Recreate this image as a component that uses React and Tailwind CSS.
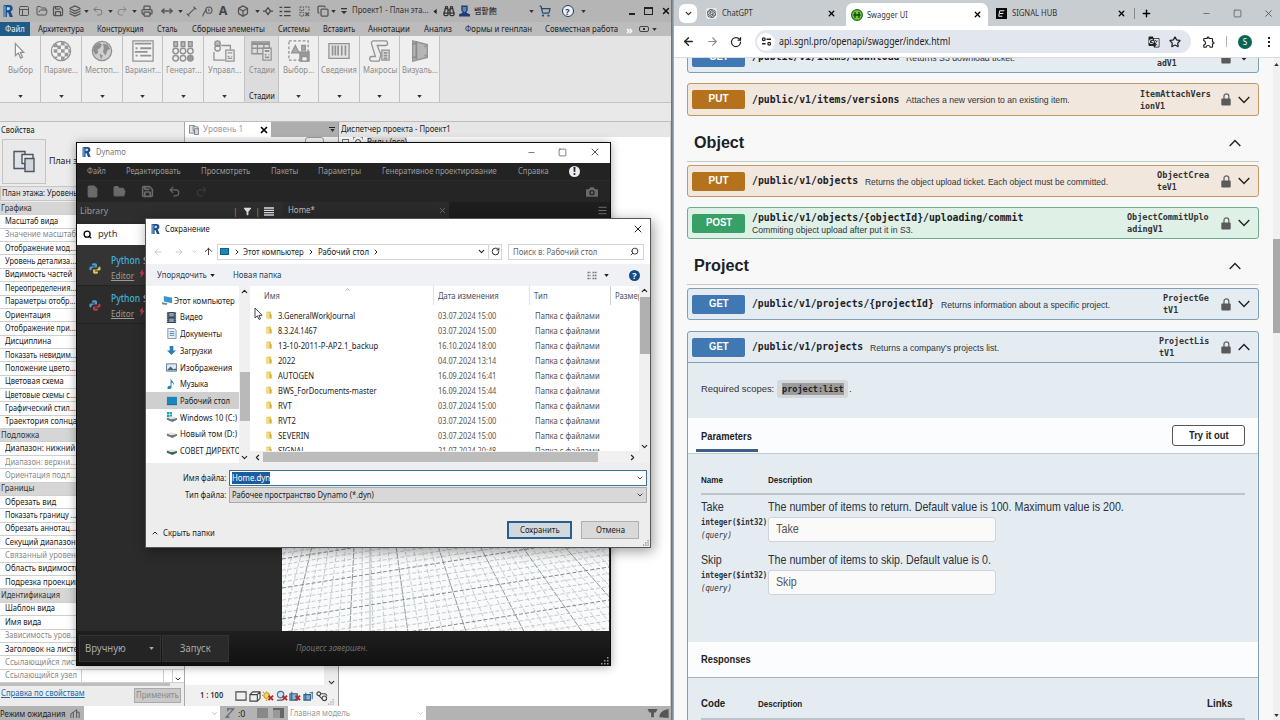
import { useLayoutEffect, useRef, useState } from "react";
import {
  ArrowLeft, ArrowRight, ArrowUp, Binoculars, Box, Camera, ChevronDown, ChevronLeft, ChevronRight, ChevronUp,
  Copy, File, FolderOpen, Layers, Menu, Minus, MoveHorizontal, PanelsTopLeft, Plus,
  Printer, Redo2, RotateCw, Save, Search, ShoppingCart, Square, Star, Undo2, X,
} from "lucide-react";
import { MdGTranslate, MdOutlineExtension, MdFilterAlt } from "react-icons/md";
import { SiOpenai } from "react-icons/si";

/* One line of text condensed horizontally to a given width. */
function Fit({ w, className = "", inner = "", children }) {
  const ref = useRef(null);
  const [k, setK] = useState(1);
  useLayoutEffect(() => {
    setK(w / ref.current.offsetWidth);
  }, [w]);
  return (
    <span className={"block shrink-0 whitespace-nowrap " + className} style={{ width: w }}>
      <span ref={ref} className={"inline-block origin-left " + inner} style={{ transform: `scaleX(${k})` }}>{children}</span>
    </span>
  );
}

function Caret({ className = "text-[#333]" }) {
  return (
    <svg viewBox="0 0 6 4" className={"h-[3px] w-[5px] " + className}><path d="M0 0h6L3 4z" fill="currentColor" /></svg>
  );
}

function RLogo({ className = "h-[12px] w-[10px]" }) {
  return (
    <svg viewBox="0 0 10 12" className={className}>
      <path d="M1 0h5.500c2 0 3.200 1.300 3.200 3.300 0 1.700-.8 2.700-2 3.100L10 12H6.700L5.200 7.500H3.900V12H1z" fill="#1d4f8c" />
      <path d="M3.900 2.200h1.700c1 0 1.300.5 1.300 1.200S6.500 4.900 5.600 4.900H3.900z" fill="#c9d9e9" />
      <path d="M0 0l2.800 1.500V12H0z" fill="#5b8fc4" />
    </svg>
  );
}

/* ---------- Revit ---------- */

function Tag() {
  return (
    <svg viewBox="0 0 16 16" className="h-[11px] w-[11px]" fill="none" stroke="#555" strokeWidth="1.600">
      <path d="M1 15c2-6 3-8 6-9" /><circle cx="10" cy="6" r="4.500" /><path d="M10 4v4" />
    </svg>
  );
}
function Dim() {
  return (
    <svg viewBox="0 0 16 16" className="h-[11px] w-[11px]" fill="none" stroke="#555" strokeWidth="1.600">
      <path d="M3 13L13 3M1 11l4 4M11 1l4 4" />
    </svg>
  );
}
function Lines() {
  return (
    <svg viewBox="0 0 12 12" className="h-[11px] w-[12px]" stroke="#444" strokeWidth="1.500">
      <path d="M0 1.500h3M5 1.500h7M0 6h3M5 6h7M0 10.500h3M5 10.500h7" />
    </svg>
  );
}
function Help({ className }) {
  return (
    <span className={"flex items-center justify-center rounded-full font-bold leading-none " + className}>?</span>
  );
}

function TitleBar() {
  const ic = "h-[12px] w-[12px] text-[#555]";
  return (
    <div className="grid h-[22px] items-center justify-items-center bg-[#b5b5b5] grid-cols-[15px_18px_17px_16px_17px_6px_18px_6px_18px_6px_19px_21px_6px_16px_16px_16px_23px_6px_16px_17px_22px_15px_6px_16px_77px_12px_15px_16px_56px_7px_19px_27px_5px_38px_16px_17px_18px]">
      <RLogo />
      <PanelsTopLeft className={ic} />
      <FolderOpen className={ic} />
      <Save className={ic} strokeWidth={2.500} />
      <Layers className={ic} strokeWidth={2.500} />
      <Caret />
      <Undo2 className="h-[12px] w-[12px] text-[#777]" />
      <Caret />
      <Redo2 className="h-[12px] w-[12px] text-[#858585]" />
      <Caret />
      <Printer className={ic} strokeWidth={2.500} />
      <MoveHorizontal className={ic} strokeWidth={3} />
      <Caret />
      <Dim />
      <Tag />
      <span className="text-[12.500px] font-bold leading-none text-[#444]">A</span>
      <Box className={ic} strokeWidth={2.500} />
      <Caret />
      <svg viewBox="0 0 12 12" className="h-[10px] w-[10px]" fill="none" stroke="#444" strokeWidth="1.500"><path d="M0 6h3l3-4 3 4-3 4-3-4M9 6h3" /></svg>
      <Lines />
      <svg viewBox="0 0 12 12" className="h-[11px] w-[11px]" fill="none" stroke="#555"><path d="M1 1h4v4H1zM1 7h4v4H1zM7 1h4v4" strokeDasharray="2 1" /><path d="M7 7l4 4M11 7l-4 4" strokeWidth="1.500" /></svg>
      <Copy className={ic} strokeWidth={2.500} />
      <Caret />
      <svg viewBox="0 0 8 8" className="h-[6px] w-[6px]" fill="#333"><path d="M0 0h8v1.500H0zM0 4h8L4 8z" /></svg>
      <Fit w={77} className="-mt-[3px] text-[9px] text-[#333]">Проект1 - План эта...</Fit>
      <svg viewBox="0 0 4 6" className="h-[5px] w-[4px]"><path d="M4 0v6L0 3z" fill="#222" /></svg>
      <Binoculars className="h-[12px] w-[12px] text-[#333]" strokeWidth={2.500} />
      <svg viewBox="0 0 12 12" className="h-[12px] w-[11px]"><path d="M2.500 0h7v5.500L8 8l4 1.500V12H0V9.500L4 8 2.500 5.500z" fill="#1f3f74" /><path d="M4 1.500h4v4L6 7.500 4 5.500z" fill="#5c83b5" /></svg>
      <div className="w-full pl-[2px]"><Fit w={23} className="font-['Noto_Sans_CJK_KR',sans-serif] text-[8px] font-medium text-[#333]">뱀팥飽</Fit></div>
      <Caret />
      <ShoppingCart className="h-[12px] w-[12px] text-[#1f4a7a]" strokeWidth={2.500} />
      <Help className="h-[12px] w-[12px] border border-[#1f3b63] bg-[#eef2f7] text-[9px] text-[#1f3b63]" />
      <Caret />
      <span />
      <div className="mt-[5px] h-[2px] w-[6px] bg-[#222]" />
      <div className="h-[8px] w-[9px] border border-t-2 border-[#222]" />
      <X className="h-[10px] w-[10px] text-[#111]" strokeWidth={3.500} />
    </div>
  );
}

const TABS = [["Архитектура", 46], ["Конструкция", 47], ["Сталь", 21], ["Сборные элементы", 73], ["Системы", 32], ["Вставить", 32], ["Аннотации", 42], ["Анализ", 28], ["Формы и генплан", 67], ["Совместная работа", 73]];

function TabBar() {
  return (
    <div className="flex h-[14px] items-center bg-[#bcbcbc] text-[8.800px] text-[#222]">
      <div className="mr-[8px] flex h-[14px] w-[30px] items-center justify-center bg-[#1d5c87] text-[#e6eef5]"><Fit w={20}>Файл</Fit></div>
      <div className="flex w-[580px] justify-between">
        {TABS.map(([t, w]) => <Fit key={t} w={w}>{t}</Fit>)}
      </div>
      <span className="ml-[8px] text-[11px] font-bold leading-none text-white">»</span>
      <div className="ml-[6px] flex h-[6px] w-[10px] items-center justify-center rounded-[2px] border border-[#444]"><div className="h-[2px] w-[2px] bg-[#333]" /></div>
      <Caret className="ml-[3px] text-[#333]" />
    </div>
  );
}

function RibbonIcon({ kind }) {
  const p = { viewBox: "0 0 24 24", className: "h-[22px] w-[22px]", fill: "none", stroke: "#929292", strokeWidth: 1.4 };
  if (kind === "cursor") return <svg {...p}><path d="M7 4v13l3.200-2.800 2.500 5.500 2-1-2.400-5.200H16z" fill="#fff" /></svg>;
  if (kind === "sphere") return (
    <svg {...p}><circle cx="12" cy="12" r="10.500" fill="#f4f4f4" />
      <path d="M4 4h4v4H4zM12 2h4v4h-4zM8 6h4v4H8zM16 6h4v4h-4zM4 10h4v4H4zM12 10h4v4h-4zM8 14h4v4H8zM16 14h4v4h-4zM12 18h4v4h-4zM5 18h3v2H5zM20 10h2v4h-2z" fill="#999" stroke="none" /></svg>);
  if (kind === "globe") return (
    <svg {...p}><circle cx="12" cy="12" r="10.500" fill="#cfcfcf" />
      <path d="M4 6l5-3 3 2-2 4-3 1 1 4-3 2-3-5zM13 4l5 1 3 5-3 1-2 6-3-4 1-4zM9 15l4 2-2 4z" fill="#8f8f8f" stroke="none" /></svg>);
  if (kind === "list") return <svg {...p}><path d="M1 1h22v22H1z" fill="#f2f2f2" /><path d="M3 4h18M9 9h12M3 13h14M9 17h12M4 9h2M4 17h2" strokeWidth="2" /></svg>;
  if (kind === "gen") return (
    <svg {...p} strokeWidth="1.600"><path d="M2 2h4v5H2zM10 2h4v5h-4zM18 2h4v5h-4z" fill="#bbb" /><circle cx="4" cy="12" r="3" /><circle cx="12" cy="12" r="3" /><circle cx="20" cy="12" r="3" /><circle cx="4" cy="20" r="3" /><circle cx="12" cy="20" r="3" /><circle cx="20" cy="20" r="3" fill="#999" /></svg>);
  if (kind === "manage") return <svg {...p}><circle cx="5" cy="4" r="3" fill="#bbb" /><circle cx="5" cy="9" r="3" /><path d="M1 13v9h12M9 6h10v5M14 11h9v12h-9z" fill="#eee" /><path d="M16 14h5M16 18h2M20 18h1M16 20h5" /></svg>;
  if (kind === "phases") return <svg {...p}><path d="M1 2h19v13H1z" fill="#ddd" /><path d="M1 4h19" strokeWidth="3" /><path d="M1 9h19M7 4v11M14 4v11" /><path d="M13 9h9v13h-9z" fill="#e5e5e5" /><path d="M15 12h5M15 16h2M19 16h1M15 19h5" strokeWidth="2" /></svg>;
  if (kind === "select") return <svg {...p}><path d="M1 1h21v21H1z" strokeDasharray="3 2" /><path d="M8 6l4 8H4zM15 6h4v5h-4z" fill="#aaa" /><path d="M13 13h10v10H13z" fill="#999" /><path d="M15 18h6v5h-6z" fill="#eee" /></svg>;
  if (kind === "barcode") return <svg {...p}><path d="M1 4h22v16H1z" fill="#e4e4e4" /><path d="M5 6v11M8 6v11M11 6v11M15 6v11M19 6v11" strokeWidth="1.800" /></svg>;
  if (kind === "macro") return <svg {...p}><path d="M5 1h13c3 0 3 5 0 5H9l4 10-2 7H3c-3 0-3-5 0-5h4L3 5c-1-2 0-4 2-4z" fill="#eee" /><path d="M14 11h8v11h-8z" fill="#ddd" /><path d="M16 14h4M16 17h4M16 20h4" strokeWidth="2" /></svg>;
  return <svg {...p}><path d="M4 1l16 4v14L4 23z" fill="#b5b5b5" /><path d="M8 1v20M4 4h3M4 19h3M17 7h2M17 17h2" stroke="#8a8a8a" strokeWidth="2" /></svg>;
}

const RIBBON = [
  ["Выбор", 25, "cursor"], ["Параме...", 34, "sphere"], ["Местоп...", 34, "globe"], ["Вариант...", 36, "list"], ["Генерат...", 35, "gen"], ["Управл...", 33, "manage"],
  ["Стадии", 26, "phases"], ["Выбор...", 31, "select"], ["Сведения", 36, "barcode"], ["Макросы", 34, "macro"], ["Визуаль...", 36, "visual"],
];

function Ribbon() {
  return (
    <div className="grid h-[67px] grid-cols-[41px_41px_41px_40px_41px_41px_34px_40px_41px_40px_40px] border-b border-[#c4c4c4] bg-[#e4e4e4]">
      {RIBBON.map(([t, w, k]) => (
        <div key={t} className={"flex h-[66px] flex-col items-center border-r border-[#c2c2c2] pt-[4px] " + (k === "phases" ? "bg-[#dcdcdc]" : "bg-[#efefef]")}>
          <RibbonIcon kind={k} />
          <Fit w={w} className="mt-[2px] text-[9.300px] leading-[12px] text-[#8c8c8c]">{t}</Fit>
          {k === "phases"
            ? <Fit w={26} className="mt-[14px] text-[8.800px] leading-[12px] text-[#222]">Стадии</Fit>
            : <Caret className="mt-[19px] text-[#333]" />}
        </div>
      ))}
    </div>
  );
}

/* [label, kind, width]; kind: h = group header, g = greyed, "" = normal */
const PROPS = [
  ["Графика", "h", 31], ["Масштаб вида", "", 53], ["Значение масштаба", "g", 75], ["Отображение мод...", "", 71], ["Уровень детализа...", "", 71], ["Видимость частей", "", 67],
  ["Переопределения...", "", 71], ["Параметры отобр...", "", 71], ["Ориентация", "", 46], ["Отображение при...", "", 71], ["Дисциплина", "", 46], ["Показать невидим...", "", 72],
  ["Положение цвето...", "", 71], ["Цветовая схема", "", 59], ["Цветовые схемы с...", "", 71], ["Графический стил...", "", 71], ["Траектория солнца", "", 72], ["Подложка", "h", 38],
  ["Диапазон: нижний", "", 70], ["Диапазон: верхни...", "g", 71], ["Ориентация подл...", "g", 71], ["Границы", "h", 33], ["Обрезать вид", "", 51], ["Показать границу ...", "", 72],
  ["Обрезать аннотац...", "", 71], ["Секущий диапазон", "", 71], ["Связанный уровень", "g", 75], ["Область видимости", "", 75], ["Подрезка проекции", "", 75], ["Идентификация", "h", 59],
  ["Шаблон вида", "", 50], ["Имя вида", "", 36], ["Зависимость уров...", "g", 72], ["Заголовок на листе", "", 73], ["Ссылающийся лист", "g", 73], ["Ссылающийся узел", "g", 72],
];

function Sheets({ className }) {
  return (
    <svg viewBox="0 0 22 22" className={className} fill="#dfe3e8" stroke="#4d5661" strokeWidth="1.400">
      <path d="M1 1h11v17H1z" /><path d="M9 4h11v9H9z" fill="#eef1f4" /><path d="M12 8h9v13h-9z" fill="#cfd5db" />
    </svg>
  );
}

function Properties() {
  return (
    <div className="flex w-[185px] flex-col border-r border-[#aaa] bg-[#ececec]">
      <div className="flex h-[16px] items-center pl-px text-[8.800px] text-[#222]"><Fit w={34}>Свойства</Fit></div>
      <div className="mx-[2px] flex h-[46px] items-center">
        <div className="flex h-[45px] w-[44px] items-center justify-center border border-[#c4c4c4] bg-[#e9e9e9]"><Sheets className="h-[23px] w-[22px]" /></div>
        <Fit w={49} className="ml-[3px] text-[8.800px] text-[#222]">План этажа</Fit>
      </div>
      <div className="mt-[2px] flex h-[15px] items-center border border-[#c6c6c6] bg-[#e4e4e4] pl-px text-[8.800px] text-[#222]"><Fit w={82}>План этажа: Уровень 1</Fit></div>
      <div className="mt-px flex h-[481px] flex-col bg-white">
        {PROPS.map(([t, k, w]) => (
          <div key={t} className={"flex h-[13.360px] items-center border-b border-[#cfcfcf] text-[8.800px] " + (k === "h" ? "bg-[#d6d6d6] pl-px text-[#333]" : k === "g" ? "pl-[5px] text-[#8a8a8a]" : "pl-[5px] text-[#222]")}>
            <Fit w={w}>{t}</Fit>
            {t === "Ссылающийся узел" && <div className="ml-[4px] flex h-full w-[92px] items-center border-x border-[#cfcfcf]"><div className="ml-auto h-full w-[9px] border-l border-[#cfcfcf]" /></div>}
            {t === "Ссылающийся узел" && <ChevronDown className="ml-[1px] mt-[6px] h-[8px] w-[8px] text-[#333]" strokeWidth={3} />}
          </div>
        ))}
      </div>
      <div className="h-[3px] w-[170px] bg-[#bdbdbd]" />
      <div className="flex h-[19px] items-center justify-between px-px text-[8.800px]">
        <Fit w={84} className="-mt-[4px] text-[#1e6aa8]" inner="underline">Справка по свойствам</Fit>
        <div className="mr-[2px] flex h-[15px] w-[47px] items-center justify-center border border-[#aaa] bg-[#c9c9c9] text-[#888]"><Fit w={43}>Применить</Fit></div>
      </div>
    </div>
  );
}

function ViewIcon({ n }) {
  const red = <path d="M7 6l5 5M12 6l-5 5" stroke="#b02a30" strokeWidth="2" />;
  return (
    <svg viewBox="0 0 13 13" className="h-[12px] w-[12px]" fill="none" stroke="#444" strokeWidth="1.200">
      {n === 0 && <path d="M1 2h11v9H1z" />}
      {n === 1 && <path d="M1 5h8v7H1zM1 5l3-3h8v7l-3 3M9 5l3-3" />}
      {n === 2 && <><circle cx="5" cy="6" r="3" fill="#f5d76a" stroke="#c59a1c" /><path d="M5 1v1M5 10v2M0 6h1M1 2l1 1" stroke="#c59a1c" />{red}</>}
      {n === 3 && <><circle cx="5" cy="5" r="3.500" fill="#cfe0ee" stroke="#3f719c" /><path d="M1 11h6" />{red}</>}
      {n === 4 && <><path d="M1 4h8v7H1zM3 2v9" fill="#8fb3d1" stroke="#30608c" />{red}</>}
      {n === 5 && <><path d="M1 5h7v6H1zM3 3v8" fill="#8fb3d1" stroke="#30608c" /><path d="M10 2v8M7 3h4" stroke="#3f719c" /></>}
      {n === 6 && <><circle cx="3" cy="4" r="2" /><circle cx="9" cy="9" r="2.500" /><path d="M3 6l4 4M5 4h5l2 2" /></>}
    </svg>
  );
}

function Grip({ className }) {
  return <svg viewBox="0 0 8 8" className={className}><path d="M6 0h1.500v1.500H6zM6 3h1.500v1.500H6zM3 3h1.500v1.500H3zM6 6h1.500v1.500H6zM3 6h1.500v1.500H3zM0 6h1.500v1.500H0z" fill="currentColor" /></svg>;
}

function ViewArea() {
  return (
    <div className="flex w-[154px] flex-col border-r border-[#999] bg-white">
      <div className="flex h-[15px] items-center bg-[#aeaeae]">
        <div className="flex h-[15px] w-[86px] items-center bg-white pl-[3px]">
          <Sheets className="h-[10px] w-[12px]" />
          <Fit w={40} className="ml-[3px] text-[8.800px] text-[#999]">Уровень 1</Fit>
          <X className="ml-[16px] h-[10px] w-[10px] text-black" strokeWidth={4} />
        </div>
        <div className="ml-auto mr-[3px] flex flex-col items-center gap-px"><div className="h-px w-[6px] bg-[#222]" /><Caret /></div>
      </div>
      <div className="flex h-[5px] justify-end overflow-hidden bg-[#f5f5f5] pr-[14px]"><div className="h-[8px] w-[19px] rounded-t-[3px] border border-[#999]" /></div>
      <div className="flex h-[543px] justify-end"><div className="flex w-[14px] flex-col items-center justify-end bg-[#ededed]"><ChevronDown className="-mb-[2px] h-[9px] w-[9px] text-[#333]" strokeWidth={3} /></div></div>
      <div className="flex h-[21px] items-center bg-[#f0f0f0] pl-[15px]">
        <Fit w={23} className="mr-[12px] text-[8.500px] font-semibold text-[#333]">1 : 100</Fit>
        <div className="flex gap-[1.500px]">{[0, 1, 2, 3, 4, 5, 6].map((n) => <ViewIcon key={n} n={n} />)}</div>
        <Grip className="mb-px h-[6px] w-[6px] self-end text-[#999]" />
      </div>
    </div>
  );
}

function StatusBar() {
  return (
    <div className="flex h-[14px] items-center bg-[#b3b3b3] text-[8.800px] text-[#222]">
      <Fit w={65} className="mt-[2px]">Режим ожидания</Fit>
      <svg viewBox="0 0 12 12" className="ml-[5px] h-[10px] w-[10px]" fill="none" stroke="#555" strokeWidth="1.200"><path d="M1 12V7l3-2v7M4 5l4-3v10M8 5h3v7" /></svg>
      <div className="ml-[4px] flex h-full w-[136px] items-center justify-end bg-white pr-[2px]"><ChevronDown className="h-[7px] w-[7px] text-[#888]" /></div>
      <svg viewBox="0 0 12 12" className="ml-[4px] h-[10px] w-[11px]" fill="none" stroke="#666" strokeWidth="1.500"><path d="M3 1h8L2 11h4M4 1v3" /></svg>
      <Fit w={7} className="ml-[3px] mt-[2px]">:0</Fit>
      <div className="ml-[12px] h-[10px] w-[11px] bg-[#888]" />
      <div className="ml-[5px] h-[10px] w-[11px] border-r-4 border-t-2 border-[#666] bg-[#999]" />
      <div className="ml-[4px] flex h-full w-[138px] items-center justify-between bg-white px-[2px] text-[#999]"><Fit w={60}>Главная модель</Fit><ChevronDown className="h-[7px] w-[7px]" /></div>
      <svg viewBox="0 0 24 12" className="ml-auto h-[11px] w-[25px]" fill="#555"><path d="M0 1h11l-2 4H7v5H4V5H2zM13 10c0-5 4-8 10-9v10z" /></svg>
    </div>
  );
}

function Revit() {
  return (
    <div className="flex h-[720px] w-[671px] flex-col overflow-hidden bg-white">
      <TitleBar />
      <TabBar />
      <Ribbon />
      <div className="h-[19px] border-b border-[#bdbdbd] bg-[#e9e9e9]" />
      <div className="flex h-[584px]">
        <Properties />
        <ViewArea />
        <div className="flex-1 border-r border-[#ccc] bg-white">
          <div className="flex h-[15px] items-center bg-[#e6e6e6] pl-[2px] text-[8.800px] text-[#222]"><Fit w={110}>Диспетчер проекта - Проект1</Fit></div>
          <div className="flex items-center gap-[4px] pl-[3px] text-[8.800px] text-[#222]">
            <div className="h-[7px] w-[7px] border border-[#777]" />
            <svg viewBox="0 0 12 12" className="h-[10px] w-[10px]" fill="none" stroke="#333"><path d="M0 3V0h3M9 0h3v3" /><circle cx="6" cy="6" r="3" /></svg>
            <Fit w={40} className="bg-[#dcdcdc]">Виды (все)</Fit>
          </div>
        </div>
      </div>
      <StatusBar />
    </div>
  );
}

/* ---------- Dynamo ---------- */

function Grid3D() {
  const minor = "#b9bfc3";
  const major = "#767d82";
  const steep = [];
  for (let i = -12; i <= 35; i++) {
    const top = 30 + i * 8.4;
    steep.push([top, top + (top - 83) * 0.38, i % 5 === 0]);
  }
  const flat = [];
  for (let i = -12; i <= 22; i++) {
    const y = 13 + i * 5.6 + i * i * 0.04;
    flat.push([y, y - 52, i % 5 === 0]);
  }
  return (
    <svg viewBox="0 0 327 85" className="h-[85px] w-[327px] bg-[#f8fafb]">
      {steep.map(([a, b, m]) => <line key={"s" + a} x1={a} y1="0" x2={b} y2="85" stroke={m ? major : minor} strokeWidth="0.8" strokeDasharray={m ? "6 1" : "4 2"} />)}
      {flat.map(([a, b, m]) => <line key={"f" + a} x1="0" y1={a} x2="327" y2={b} stroke={m ? major : minor} strokeWidth={m ? 0.9 : 0.8} strokeDasharray="4 2" />)}
      <line x1="88" y1="0" x2="88" y2="85" stroke="#b9bec2" strokeWidth="1" />
    </svg>
  );
}

function PyItem({ first }) {
  return (
    <div className={"flex border-b border-[#222] pl-[12px] " + (first ? "h-[41px] bg-[#343434]" : "h-[38px] bg-[#2c2c2c]")}>
      <svg viewBox="0 0 12 12" className={"h-[13px] w-[12px] " + (first ? "mt-[17px]" : "mt-[13px]")}>
        <path d="M3 1.500C3 .5 8 .3 8 2v3H4.500C2.500 5 3 8 1.500 8 0 8 0 4 1.500 4H6V3H3z" fill="#4f9bd1" />
        <path d="M9 10.500c0 1-5 1.200-5-.5V7h3.500C9.500 7 9 4 10.500 4 12 4 12 8 10.500 8H6v1h3z" fill={first ? "#e2c04c" : "#c23a45"} />
      </svg>
      <div className={"ml-[10px] " + (first ? "mt-[9px]" : "mt-[6px]")}>
        <div className="flex gap-[3px] text-[9.800px] leading-[13px]"><Fit w={29} className="font-medium text-[#3fb0dc]">Python</Fit><span className="text-[#ccc]">S</span></div>
        <div className="mt-[2px] flex gap-[5px] text-[9.300px] leading-[13px] text-[#9a9a9a]">
          <Fit w={23} inner="underline">Editor</Fit>
          <svg viewBox="0 0 6 10" className="h-[9px] w-[6px]"><path d="M4 0L0 5h2.500L1 10l5-6H3.500z" fill="#d23a55" /></svg>
        </div>
      </div>
    </div>
  );
}

function Dynamo() {
  const ti = "h-[13px] w-[13px]";
  return (
    <div className="absolute left-[76px] top-[142px] flex h-[524px] w-[535px] flex-col border border-[#0c0c0c] bg-[#2b2b2b] shadow-[0_1px_9px_rgba(0,0,0,0.35)]">
      <div className="flex h-[20px] shrink-0 items-center bg-white pb-[2px] pl-[5px]">
        <RLogo className="h-[10px] w-[9px]" />
        <Fit w={30} className="ml-[5px] text-[9.300px] text-[#777]">Dynamo</Fit>
        <div className="ml-auto flex items-center gap-[22px] pr-[9px] text-[#555]">
          <Minus className="h-[9px] w-[9px]" strokeWidth={2} /><Square className="h-[9px] w-[9px]" strokeWidth={2} /><X className="h-[12px] w-[12px]" strokeWidth={2} />
        </div>
      </div>
      <div className="flex h-[17px] shrink-0 items-center bg-[#232323] pb-px pl-[10px] text-[8.800px] text-[#9a9a9a]">
        <Fit w={19}>Файл</Fit>
        <Fit w={55} className="ml-[20px]">Редактировать</Fit>
        <Fit w={49} className="ml-[20px]">Просмотреть</Fit>
        <Fit w={27} className="ml-[21px]">Пакеты</Fit>
        <Fit w={43} className="ml-[20px]">Параметры</Fit>
        <Fit w={115} className="ml-[21px]">Генеративное проектирование</Fit>
        <Fit w={31} className="ml-[21px]">Справка</Fit>
        <span className="ml-[20px] flex h-[11px] w-[11px] items-center justify-center rounded-full bg-[#ececec] text-[10px] font-extrabold leading-none text-[#222]">!</span>
      </div>
      <div className="flex h-[22px] shrink-0 items-center border-t border-[#2c2c2c] bg-[#252525] pl-[9px] pr-[10px] text-[#6a6a6a]">
        <File className={ti} fill="#6a6a6a" /><FolderOpen className={ti + " ml-[14px]"} fill="#6a6a6a" /><Save className={ti + " ml-[15px]"} strokeWidth={3} />
        <Undo2 className={ti + " ml-[14px]"} /><Redo2 className={ti + " ml-[14px] text-[#3a3a3a]"} />
        <Camera className="ml-auto h-[16px] w-[16px] text-[#252525]" fill="#6a6a6a" />
      </div>
      <div className="flex h-[19px] shrink-0 bg-[#1d1d1d]">
        <div className="flex h-[19px] w-[205px] items-center bg-[#2e2e2e] pl-[3px] text-[#999]">
          <Fit w={28} className="text-[9.800px]">Library</Fit>
          <span className="ml-auto text-[8px]">|</span>
          <MdFilterAlt className="ml-[4px] h-[11px] w-[11px] text-[#ddd]" />
          <span className="ml-[3px] text-[8px]">|</span>
          <svg viewBox="0 0 10 9" className="ml-[4px] mr-[8px] h-[9px] w-[10px]" stroke="#ddd" strokeWidth="1.300"><path d="M0 1h10M0 3.300h10M0 5.700h10M0 8h10" /></svg>
        </div>
        <div className="flex h-[16px] w-[167px] items-center justify-between bg-[#2a2a2a] pl-[6px] pr-[2px] text-[#bbb]">
          <Fit w={27} className="text-[8.800px]">Home*</Fit><X className="h-[9px] w-[9px] text-[#777]" />
        </div>
        <div className="flex h-[16px] flex-1 items-center justify-end pr-[2px]"><Menu className="h-[11px] w-[11px] text-[#777]" /></div>
      </div>
      <div className="flex h-[410px] shrink-0">
        <div className="w-[205px] bg-[#2b2b2b] pt-[3px]">
          <div className="flex h-[21px] items-center bg-white pl-[6px]"><Search className="h-[9px] w-[9px] text-black" strokeWidth={3.500} /><Fit w={19} className="ml-[6px] text-[9.800px] text-[#333]">pyth</Fit></div>
          <PyItem first />
          <PyItem />
        </div>
        <div className="flex flex-1 flex-col justify-end"><Grid3D /></div>
      </div>
      <div className="flex flex-1 items-center bg-gradient-to-b from-[#1f1f1f] to-[#111]">
        <div className="ml-[2px] flex h-[27px] w-[82px] items-center justify-between border border-[#333] bg-[#242424] pl-[5px] pr-[6px] text-[11px] text-[#a9a9a9]"><Fit w={41}>Вручную</Fit><Caret className="text-[#a9a9a9]" /></div>
        <div className="ml-px flex h-[27px] w-[67px] items-center justify-center border border-[#333] bg-[#2a2a2a] text-[11px] text-[#a9a9a9]"><Fit w={31}>Запуск</Fit></div>
        <Fit w={72} className="ml-[67px] text-[8.800px] italic text-[#6f6f6f]">Процесс завершен.</Fit>
        <Grip className="ml-auto mr-px h-[8px] w-[8px] self-end text-[#999]" />
      </div>
    </div>
  );
}

/* ---------- Save dialog ---------- */

function TreeIcon({ k }) {
  const c = "h-[11px] w-[11px] shrink-0";
  if (k === "pc") return <svg viewBox="0 0 12 12" className={c}><path d="M2 1l9 2v6L2 7z" fill="#3a96cc" /><path d="M0 8l6 1-1 2-5-1z" fill="#7a8790" /></svg>;
  if (k === "video") return <svg viewBox="0 0 12 12" className={c}><path d="M1 0h10v12H1z" fill="#39424e" /><path d="M3.500 1h5v4h-5zM3.500 7h5v4h-5z" fill="#7e9fc2" /><path d="M2 0v12M10 0v12" stroke="#c9d2da" strokeDasharray="1 1" /></svg>;
  if (k === "doc") return <svg viewBox="0 0 12 12" className={c}><path d="M2 .5h7l2 2v9H2z" fill="#eaf1f6" stroke="#7892a6" /><path d="M4 4h5M4 6h5M4 8h5" stroke="#4d88b5" /></svg>;
  if (k === "down") return <svg viewBox="0 0 12 12" className={c}><path d="M4 1h4v5h3l-5 5-5-5h3z" fill="#2e7fb5" /></svg>;
  if (k === "img") return <svg viewBox="0 0 12 12" className={c}><path d="M.5 2h11v8H.5z" fill="#dceaf3" stroke="#5f7687" /><path d="M1 9l4-4 3 3 3-1v2z" fill="#41667e" /></svg>;
  if (k === "music") return <svg viewBox="0 0 12 12" className={c}><path d="M5 0c0 3 5 4 3 8 0-2-1-3-2-3v5c0 2.500-4.500 3-4.500.8S4 8 5 8.500z" fill="#2482b8" /></svg>;
  if (k === "desk") return <svg viewBox="0 0 12 12" className={c}><path d="M1 2h11v9H1z" fill="#1a86bd" /><path d="M1 10h11v1H1z" fill="#176a95" /></svg>;
  return (
    <svg viewBox="0 0 12 12" className={c}>
      {k === "win" && <path d="M1 0h2.500v2.500H1zM4 0h2.500v2.500H4zM1 3h2.500v2.500H1zM4 3h2.500v2.500H4z" fill="#1c9fbd" />}
      <path d="M1 6l5 1.500L12 6.500v2L7 11 1 8.500z" fill={k === "net" ? "#3f6454" : "#6f767c"} /><path d="M1 6l5-1.500 6 1.500-6 2z" fill="#e3e6e8" />
    </svg>
  );
}

const TREE = [["Видео", 23, "video"], ["Документы", 42, "doc"], ["Загрузки", 32, "down"], ["Изображения", 52, "img"], ["Музыка", 28, "music"], ["Рабочий стол", 50, "desk"], ["Windows 10 (C:)", 57, "win"], ["Новый том (D:)", 57, "disk"], ["СОВЕТ ДИРЕКТОРОВ", 76, "net"]];
const FILES = [
  ["3.GeneralWorkJournal", 77, "03.07.2024 15:00"], ["8.3.24.1467", 39, "03.07.2024 15:00"], ["13-10-2011-P-AP2.1_backup", 100, "16.10.2024 18:00"], ["2022", 17, "04.07.2024 13:14"], ["AUTOGEN", 36, "16.09.2024 16:41"],
  ["BWS_ForDocuments-master", 99, "16.09.2024 15:44"], ["RVT", 14, "03.07.2024 15:00"], ["RVT2", 18, "03.07.2024 15:00"], ["SEVERIN", 31, "03.07.2024 15:00"], ["SIGNAL", 27, "21.07.2024 20:48"],
];

function SaveDialog() {
  return (
    <div className="absolute left-[145px] top-[218px] flex h-[330px] w-[506px] flex-col border border-[#555] bg-white text-[8.900px] text-[#222] shadow-[2px_3px_12px_rgba(0,0,0,0.4)]">
      <div className="flex h-[20px] shrink-0 items-center pl-[5px]">
        <RLogo className="h-[10px] w-[9px]" />
        <Fit w={45} className="ml-[5px]">Сохранение</Fit>
        <X className="ml-auto mr-[6px] h-[12px] w-[12px]" strokeWidth={2} />
      </div>
      <div className="flex h-[25px] shrink-0 items-center">
        <ArrowLeft className="ml-[7px] h-[10px] w-[10px] text-[#c2c2c2]" /><ArrowRight className="ml-[11px] h-[10px] w-[10px] text-[#c2c2c2]" /><ChevronDown className="ml-[7px] h-[7px] w-[7px] text-[#aaa]" /><ArrowUp className="ml-[5px] h-[11px] w-[11px] text-[#333]" />
        <div className="ml-[3px] flex h-[16px] w-[285px] items-center border border-[#d5d5d5] pl-[2px]">
          <div className="h-[7px] w-[9px] border border-[#12607f] bg-[#1a86bd]" />
          <ChevronRight className="ml-[4px] h-[8px] w-[8px]" strokeWidth={3} />
          <Fit w={61} className="ml-[2px]">Этот компьютер</Fit>
          <ChevronRight className="ml-[3px] h-[8px] w-[8px]" strokeWidth={3} />
          <Fit w={51} className="ml-[3px]">Рабочий стол</Fit>
          <ChevronRight className="ml-[3px] h-[8px] w-[8px]" strokeWidth={3} />
          <ChevronDown className="ml-auto mr-[2px] h-[9px] w-[9px]" strokeWidth={3} />
          <div className="flex h-full w-[13px] items-center justify-center border-l border-[#d5d5d5]"><RotateCw className="h-[9px] w-[9px]" strokeWidth={2.500} /></div>
        </div>
        <div className="ml-[6px] flex h-[16px] w-[136px] items-center justify-between border border-[#d5d5d5] pl-[4px] pr-[4px] text-[#666]"><Fit w={84}>Поиск в: Рабочий стол</Fit><Search className="h-[9px] w-[9px] -scale-x-100 text-[#333]" strokeWidth={2.500} /></div>
      </div>
      <div className="flex h-[22px] shrink-0 items-center bg-[#eff1f4] pl-[11px] text-[#2b3f5c]">
        <Fit w={50}>Упорядочить</Fit><Caret className="ml-[3px] text-[#222]" />
        <Fit w={48} className="ml-[18px]">Новая папка</Fit>
        <svg viewBox="0 0 10 9" className="ml-auto h-[9px] w-[11px]" stroke="#777"><path d="M0 1.500h3M5 1.500h4M0 4.500h3M5 4.500h4M0 7.500h3M5 7.500h4" strokeWidth="1.500" strokeDasharray="2 .5" /></svg>
        <Caret className="ml-[6px] text-[#222]" />
        <Help className="ml-[20px] mr-[10px] h-[11px] w-[11px] bg-[#134b85] text-[9px] text-white" />
      </div>
      <div className="flex h-[177px] shrink-0">
        <div className="w-[93px] overflow-hidden pt-[6px]">
          <div className="flex h-[16.700px] items-center pl-[16px]"><TreeIcon k="pc" /><Fit w={61} className="ml-px">Этот компьютер</Fit></div>
          {TREE.map(([t, w, k]) => (
            <div key={t} className={"flex h-[16.700px] items-center pl-[20px] " + (k === "desk" ? "bg-[#cfcfcf]" : "")}><TreeIcon k={k} /><Fit w={w} className="ml-[3px]">{t}</Fit></div>
          ))}
        </div>
        <div className="flex w-[11px] flex-col items-center justify-between bg-[#f0f0f0] py-px">
          <ChevronUp className="h-[9px] w-[9px]" strokeWidth={3} />
          <div className="mt-[43px] h-[49px] w-[10px] bg-[#b9b9b9]" />
          <ChevronDown className="h-[9px] w-[9px]" strokeWidth={3} />
        </div>
        <div className="flex w-[389px] flex-col">
          <div className="flex h-[165px] flex-col overflow-hidden">
            <div className="grid h-[18px] shrink-0 grid-cols-[184px_96px_81px_28px] text-[#44546a]">
              <div className="flex items-center border-r border-[#e3e3e3] pl-[14px]"><Fit w={16}>Имя</Fit><ChevronUp className="mb-[12px] ml-[64px] h-[7px] w-[7px] text-[#777]" /></div>
              <div className="flex items-center border-r border-[#e3e3e3] pl-[4px]"><Fit w={61}>Дата изменения</Fit></div>
              <div className="flex items-center border-r border-[#d0d0d0] pl-[4px]"><Fit w={14}>Тип</Fit></div>
              <div className="flex items-center overflow-hidden pl-[4px]"><Fit w={28}>Размер</Fit></div>
            </div>
            <div className="h-[4px] shrink-0" />
            {FILES.map(([n, w, d]) => (
              <div key={n} className="grid h-[15.050px] shrink-0 grid-cols-[184px_96px_109px] items-center">
                <div className="flex items-center pl-[16px]">
                  <svg viewBox="0 0 7 9" className="h-[9px] w-[6px]"><path d="M1 0h5v8H1z" fill="#e3c763" /><path d="M0 0l3.500 1.500V9L0 8z" fill="#f3dd8a" /><path d="M5 3h1.500v5H5z" fill="#c9a435" /></svg>
                  <Fit w={w} className="ml-[6px]">{n}</Fit>
                </div>
                <Fit w={58} className="pl-[4px] text-[#555]">{d}</Fit>
                <Fit w={65} className="pl-[5px] text-[#555]">Папка с файлами</Fit>
              </div>
            ))}
          </div>
          <div className="flex h-[12px] items-center bg-[#f0f0f0]"><ChevronLeft className="ml-[3px] h-[9px] w-[9px]" strokeWidth={3} /><div className="ml-px h-[10px] w-[335px] bg-[#bcbcbc]" /><ChevronRight className="ml-auto mr-[2px] h-[9px] w-[9px]" strokeWidth={3} /></div>
        </div>
        <div className="flex w-[11px] flex-col items-center bg-[#f0f0f0]"><ChevronUp className="mb-[2px] h-[9px] w-[9px]" strokeWidth={3} /><div className="h-[57px] w-[10px] bg-[#b0b0b0]" /><ChevronDown className="mb-[12px] mt-auto h-[9px] w-[9px]" strokeWidth={3} /></div>
      </div>
      <div className="flex flex-1 flex-col bg-[#ededed] pr-[3px] pt-[7px]">
        <div className="flex h-[16px] items-center">
          <Fit w={43} className="ml-[37px]">Имя файла:</Fit>
          <div className="ml-[3px] flex h-[16px] flex-1 items-center justify-between border border-[#3d7299] bg-white px-[2px]"><Fit w={38} className="bg-[#1c5c9c] leading-[12px] text-white">Home.dyn</Fit><ChevronDown className="h-[8px] w-[8px]" strokeWidth={2.500} /></div>
        </div>
        <div className="mt-px flex h-[16px] items-center">
          <Fit w={41} className="ml-[39px]">Тип файла:</Fit>
          <div className="ml-[3px] flex h-[16px] flex-1 items-center justify-between border border-[#aaa] bg-[#d8d8d8] px-[2px]"><Fit w={142}>Рабочее пространство Dynamo (*.dyn)</Fit><ChevronDown className="h-[8px] w-[8px]" strokeWidth={2.500} /></div>
        </div>
        <div className="mt-[18px] flex items-center">
          <ChevronUp className="ml-[5px] mt-[5px] h-[8px] w-[8px]" strokeWidth={3} />
          <Fit w={52} className="ml-[4px] mt-[5px]">Скрыть папки</Fit>
          <div className="ml-auto flex h-[18px] w-[65px] items-center justify-center border-2 border-[#245f8f] bg-[#d3d8dc]"><Fit w={40}>Сохранить</Fit></div>
          <div className="ml-[9px] mr-[8px] flex h-[18px] w-[58px] items-center justify-center border border-[#b0b0b0] bg-[#d9d9d9]"><Fit w={29}>Отмена</Fit></div>
        </div>
        <Grip className="-mr-[2px] mb-px ml-auto mt-auto h-[6px] w-[6px] text-[#777]" />
      </div>
    </div>
  );
}

/* ---------- Browser ---------- */

function TabStrip() {
  return (
    <div className="flex h-[26px] items-center bg-[#c8cdd2] pl-[5px] text-[9.500px] text-[#333]">
      <div className="flex h-[19px] w-[18px] items-center justify-center rounded-[6px] bg-white"><ChevronDown className="h-[9px] w-[9px]" strokeWidth={3.500} /></div>
      <div className="ml-[9px] flex h-[11px] w-[11px] items-center justify-center rounded-[2px] bg-[#e6e8ea]"><SiOpenai className="h-[9px] w-[9px] text-[#222]" /></div>
      <Fit w={31} className="ml-[5px]">ChatGPT</Fit>
      <X className="ml-[74px] h-[9px] w-[9px] text-black" strokeWidth={3.500} />
      <div className="ml-[10px] flex h-[23px] w-[142px] items-center self-end rounded-t-[7px] bg-white pl-[5px]">
        <svg viewBox="0 0 12 12" className="h-[12px] w-[12px]"><circle cx="6" cy="6" r="5.400" fill="#73c92e" stroke="#216b2b" strokeWidth="1.200" /><path d="M4 3v6M8 3v6M2.500 6h7" stroke="#16401c" strokeWidth="1.300" /></svg>
        <Fit w={41} className="ml-[4px]">Swagger UI</Fit>
        <X className="ml-auto mr-[6px] h-[9px] w-[9px] text-black" strokeWidth={3.500} />
      </div>
      <svg viewBox="0 0 12 12" className="ml-[8px] h-[11px] w-[11px]"><path d="M0 0h12v12H0z" fill="#0b0b0b" /><path d="M4 3h5M4 6h4M3 9h4M4 3L3 9" stroke="#fff" fill="none" /></svg>
      <Fit w={45} className="ml-[5px]">SIGNAL HUB</Fit>
      <X className="ml-[60px] h-[9px] w-[9px] text-black" strokeWidth={3.500} />
      <div className="ml-[8px] h-[11px] w-px bg-[#888]" />
      <Plus className="ml-[6px] h-[11px] w-[11px] text-black" strokeWidth={3} />
      <Minus className="ml-[50px] h-[9px] w-[9px] text-[#555]" /><Square className="ml-[22px] h-[9px] w-[9px] text-[#555]" /><X className="ml-[21px] h-[11px] w-[11px] text-[#555]" />
    </div>
  );
}

function AddressBar() {
  return (
    <div className="flex h-[32px] items-center border-b border-[#d9d9d9] bg-white pl-[8px] text-[#222]">
      <ArrowLeft className="h-[13px] w-[13px]" strokeWidth={2.500} /><ArrowRight className="ml-[11px] h-[13px] w-[13px] text-[#8a8a8a]" /><RotateCw className="ml-[11px] h-[12px] w-[12px]" strokeWidth={2.500} />
      <div className="ml-[13px] flex h-[23px] w-[436px] items-center rounded-full bg-[#e2e6ee] pl-[2px]">
        <div className="flex h-[18px] w-[18px] items-center justify-center rounded-full bg-white">
          <svg viewBox="0 0 12 10" className="h-[9px] w-[11px]" fill="none" stroke="#222" strokeWidth="1.400"><circle cx="3" cy="2.500" r="1.500" /><path d="M6 2.500h5M1 7.500h4" /><circle cx="9" cy="7.500" r="1.500" /></svg>
        </div>
        <Fit w={171} className="ml-[4px] text-[10.500px]">api.sgnl.pro/openapi/swagger/index.html</Fit>
        <MdGTranslate className="ml-auto h-[12px] w-[12px]" /><Star className="ml-[9px] mr-[10px] h-[12px] w-[12px]" strokeWidth={2.500} />
      </div>
      <MdOutlineExtension className="ml-[11px] h-[14px] w-[14px]" />
      <div className="ml-[10px] h-[11px] w-px bg-[#b5b5b5]" />
      <div className="ml-[11px] flex h-[14px] w-[14px] items-center justify-center rounded-full bg-[#0b6457] text-[8px] text-white">S</div>
      <div className="ml-[16px] flex flex-col gap-[2px]"><i className="h-[2px] w-[2px] bg-[#222]" /><i className="h-[2px] w-[2px] bg-[#222]" /><i className="h-[2px] w-[2px] bg-[#222]" /></div>
    </div>
  );
}

const METHOD = {
  GET: { box: "border-[#7f9fb4] bg-[#e4ebf1]", badge: "bg-[#3f78b2]", w: 20 },
  PUT: { box: "border-[#bd9a68] bg-[#f1e7dd]", badge: "bg-[#b5721c]", w: 20 },
  POST: { box: "border-[#70ad90] bg-[#dff0e6]", badge: "bg-[#37a066]", w: 26 },
};

function Arrow({ up, className = "" }) {
  return (
    <svg viewBox="0 0 12 8" className={"h-[8px] w-[12px] shrink-0 " + className} fill="none" stroke="#222" strokeWidth="1.400">
      <path d={up ? "M.7 7L6 1.500 11.300 7" : "M.7 1L6 6.500 11.300 1"} />
    </svg>
  );
}

function Lock() {
  return (
    <svg viewBox="0 0 10 13" className="h-[13px] w-[10px] shrink-0"><path d="M3 6V3.200C3 0 7.800 0 7.800 3.200V6" fill="none" stroke="#666" strokeWidth="1.300" /><rect x=".3" y="5.500" width="9.400" height="7" rx="1" fill="#5a5a5a" /></svg>
  );
}

function OpRow({ method, path, pw, desc, dw, stacked, op, ow, op2, ow2, open }) {
  const p = <Fit w={pw} className="font-['DejaVu_Sans_Mono',monospace] text-[9.800px] font-bold leading-[12px] text-[#1c2126]">{path}</Fit>;
  const d = <Fit w={dw} className="text-[9.800px] leading-[11px] text-[#2f3540]">{desc}</Fit>;
  return (
    <div className="flex h-full w-full items-center pl-[4px]">
      <div className={"flex h-[19px] w-[53px] shrink-0 items-center justify-center rounded-[2px] text-[10px] font-bold text-white " + METHOD[method].badge}><Fit w={METHOD[method].w}>{method}</Fit></div>
      <div className={"ml-[7px] flex " + (stacked ? "flex-col" : "items-center gap-[7px]")}>{p}{d}</div>
      <div className={"ml-auto flex h-[30px] flex-col justify-center font-['DejaVu_Sans_Mono',monospace] text-[9px] font-bold leading-[12px] text-[#333] " + (ow === 71 ? "mr-[10px]" : "mr-[12px]")}>
        <Fit w={ow}>{op}</Fit><Fit w={ow2}>{op2}</Fit>
      </div>
      <Lock />
      <Arrow up={open} className="ml-[7px] mr-[8px]" />
    </div>
  );
}

function Op(props) {
  return <div className={"shrink-0 rounded-[3px] border " + METHOD[props.method].box + " " + (props.h || "h-[32px]")}><OpRow {...props} /></div>;
}

function Section({ title, w }) {
  return (
    <div className="mb-[3px] flex h-[46px] shrink-0 items-center justify-between border-b border-[#c3c8cc] pl-[7px] pr-[18px] pt-[9px]">
      <Fit w={w} className="text-[16.800px] font-bold text-[#1c2126]">{title}</Fit><Arrow up />
    </div>
  );
}

function Param({ name, desc, dw, nw }) {
  return (
    <div className="grid h-[53px] grid-cols-[67px_1fr] text-[12.200px] text-[#2c3238]">
      <div>
        <Fit w={nw} className="leading-[16px]">{name}</Fit>
        <Fit w={66} className="font-['DejaVu_Sans_Mono',monospace] text-[9px] font-bold leading-[14px]">integer($int32)</Fit>
        <Fit w={31} className="font-['DejaVu_Sans_Mono',monospace] text-[9px] italic leading-[13px]">(query)</Fit>
      </div>
      <div>
        <Fit w={dw} className="leading-[16px]">{desc}</Fit>
        <div className="mt-[2px] flex h-[25px] w-[228px] items-center rounded-[3px] border border-[#cfd3d6] bg-[#fafafa] pl-[7px] text-[#555]"><Fit w={nw}>{name}</Fit></div>
      </div>
    </div>
  );
}

function Swagger() {
  return (
    <div className="flex h-[662px] overflow-hidden bg-[#f8f8f8] font-['Liberation_Sans',Arial,sans-serif] text-[#222]">
      <div className="flex w-[585px] flex-col pl-[13px]">
        <div className="-mt-[17px] flex shrink-0 flex-col">
          <Op h="h-[32px]" method="GET" path="/public/v1/items/download" pw={147} desc="Returns S3 download ticket." dw={109} op="ItemDownlo" ow={52} op2="adV1" ow2={20} />
        </div>
        <div className="h-[10px] shrink-0" />
        <Op h="h-[33px]" method="PUT" path="/public/v1/items/versions" pw={147} desc="Attaches a new version to an existing item." dw={164} op="ItemAttachVers" ow={71} op2="ionV1" ow2={25} />
        <Section title="Object" w={50} />
        <Op method="PUT" path="/public/v1/objects" pw={106} desc="Returns the object upload ticket. Each object must be committed." dw={243} op="ObjectCrea" ow={52} op2="teV1" ow2={20} />
        <div className="h-[10px] shrink-0" />
        <Op method="POST" stacked path="/public/v1/objects/{objectId}/uploading/commit" pw={271} desc="Commiting object upload after put it in S3." dw={161} op="ObjectCommitUplo" ow={82} op2="adingV1" ow2={36} />
        <Section title="Project" w={55} />
        <Op method="GET" path="/public/v1/projects/{projectId}" pw={182} desc="Returns information about a specific project." dw={169} op="ProjectGe" ow={46} op2="tV1" ow2={15} />
        <div className="h-[11px] shrink-0" />
        <div className="flex h-[420px] shrink-0 flex-col rounded-t-[3px] border border-[#7f9fb4] bg-[#e4ebf1]">
          <div className="h-[31px] shrink-0 border-b border-[#7f9fb4]"><OpRow open method="GET" path="/public/v1/projects" pw={111} desc="Returns a company's projects list." dw={129} op="ProjectLis" ow={50} op2="tV1" ow2={15} /></div>
          <div className="flex h-[55px] shrink-0 items-center pb-[3px] pl-[13px] text-[9.800px] text-[#2f3540]">
            <Fit w={73}>Required scopes:</Fit>
            <div className="ml-[3px] flex h-[18px] w-[71px] items-center justify-center rounded-[3px] bg-[#d3d8dc]"><Fit w={62} className="bg-[#9c9c9c] font-['DejaVu_Sans_Mono',monospace] text-[9.500px] font-bold text-[#222]">project:list</Fit></div>
            <span className="ml-px">.</span>
          </div>
          <div className="flex h-[36px] shrink-0 items-center justify-between border-b border-[#c5cacd] bg-[#fbfcfd] pl-[8px] pr-[13px]">
            <div className="flex h-[34px] w-[62px] flex-col justify-end self-start border-b-[3px] border-[#3c5f88] pb-[6px] pl-[5px]"><Fit w={51} className="text-[10.800px] font-bold leading-[14px]">Parameters</Fit></div>
            <div className="flex h-[21px] w-[73px] items-center justify-center rounded-[3px] border-[1.500px] border-[#555] bg-white text-[10.800px] font-bold"><Fit w={40}>Try it out</Fit></div>
          </div>
          <div className="h-[188px] shrink-0 pl-[13px] pr-[13px] pt-[20px]">
            <div className="mb-[4px] grid h-[21px] grid-cols-[67px_1fr] border-b-2 border-[#bcc5ca] text-[9.500px] font-bold"><Fit w={22}>Name</Fit><Fit w={44}>Description</Fit></div>
            <Param name="Take" nw={23} desc="The number of items to return. Default value is 100. Maximum value is 200." dw={356} />
            <Param name="Skip" nw={21} desc="The number of items to skip. Default value is 0." dw={223} />
          </div>
          <div className="flex h-[36px] shrink-0 items-center border-b border-[#aab3b9] bg-[#fbfcfd] pl-[13px] text-[10.800px] font-bold"><Fit w={50}>Responses</Fit></div>
          <div className="mx-[13px] flex h-[42px] shrink-0 items-center border-b-2 border-[#bcc5ca] pt-[12px] text-[10.500px] font-bold"><Fit w={24}>Code</Fit><Fit w={44} className="ml-[33px] text-[9.500px]">Description</Fit><Fit w={25} className="ml-auto mr-[13px]">Links</Fit></div>
        </div>
      </div>
      <div className="ml-auto flex w-[7px] flex-col items-center bg-[#f0f0f0]">
        <svg viewBox="0 0 6 4" className="mt-[5px] h-[3px] w-[5px]"><path d="M0 4h6L3 0z" fill="#333" /></svg>
        <div className="mt-[173px] h-[94px] w-full bg-[#a9a9a9]" />
        <Caret className="mb-[3px] mt-auto text-[#333]" />
      </div>
    </div>
  );
}

export default function App() {
  return (
    <div className="relative flex h-[720px] w-[1280px] overflow-hidden font-['Noto_Sans','Open_Sans',sans-serif] leading-[1.250]">
      <Revit />
      <div className="w-[3px] bg-gradient-to-r from-[#5d6b78] to-[#aab6c0]" />
      <div className="flex flex-1 flex-col">
        <TabStrip />
        <AddressBar />
        <Swagger />
      </div>
      <Dynamo />
      <SaveDialog />
      <svg viewBox="0 0 9 13" className="absolute left-[254px] top-[307px] h-[13px] w-[9px]"><path d="M1 1v10l2.300-2.200 1.700 3.700 1.500-.7L4.900 8.300h3.300z" fill="#fff" stroke="#333" strokeWidth=".9" /></svg>
    </div>
  );
}
